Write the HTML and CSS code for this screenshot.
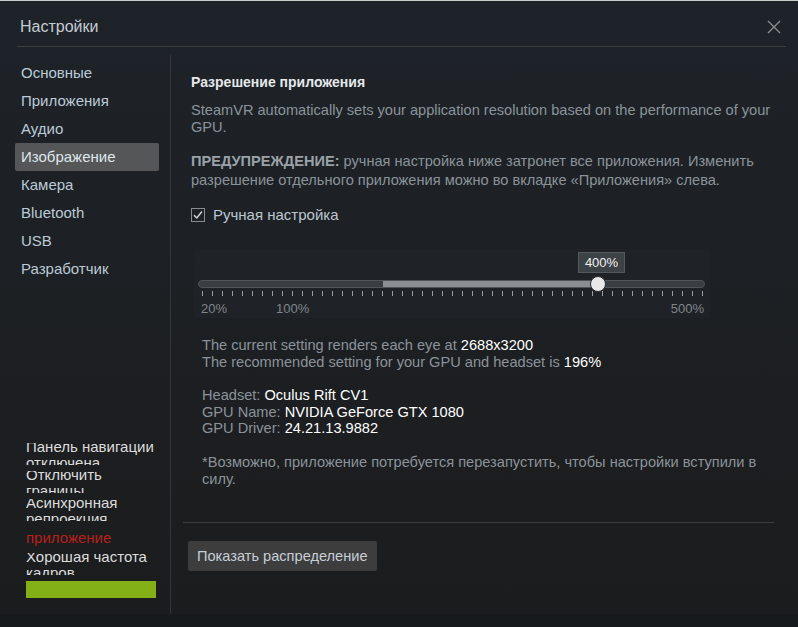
FILE: index.html
```html
<!DOCTYPE html>
<html>
<head>
<meta charset="UTF-8">
<title>Настройки</title>
<link rel="stylesheet" href="styles.css">
</head>
<body>
<div class="window">
	<div class="header">
		<span class="title">Настройки</span>
		<svg class="close" width="14" height="14" viewBox="0 0 14 14">
			<path d="M1 1 L13 13 M13 1 L1 13" stroke="#8a8d90" stroke-width="1.4" fill="none"/>
		</svg>
	</div>

	<div class="body">
		<!-- левое меню -->
		<div class="sidebar">
			<ul class="nav">
				<li>Основные</li>
				<li>Приложения</li>
				<li>Аудио</li>
				<li class="active">Изображение</li>
				<li>Камера</li>
				<li>Bluetooth</li>
				<li>USB</li>
				<li>Разработчик</li>
			</ul>
			<div class="status">
				<div class="status_item"><span>Панель навигации отключена</span></div>
				<div class="status_item"><span>Отключить границы</span></div>
				<div class="status_item"><span>Асинхронная репроекция</span></div>
				<div class="status_item red"><span>приложение</span></div>
				<div class="status_item"><span>Хорошая частота кадров</span></div>
				<div class="status_bar"></div>
			</div>
		</div>

		<!-- содержимое -->
		<div class="main">
			<div class="content">
				<h3>Разрешение приложения</h3>
				<p class="desc">SteamVR automatically sets your application resolution based on the performance of your GPU.</p>
				<p class="desc warn"><b>ПРЕДУПРЕЖДЕНИЕ:</b> ручная настройка ниже затронет все приложения. Изменить разрешение отдельного приложения можно во вкладке «Приложения» слева.</p>

				<label class="check">
					<svg width="14" height="14" viewBox="0 0 14 14">
						<rect x="0.5" y="0.5" width="13" height="13" fill="none" stroke="#8a8d90"/>
						<path d="M3 7.2 L5.8 10 L11 3.5" stroke="#d0d4d8" stroke-width="1.5" fill="none"/>
					</svg>
					Ручная настройка
				</label>

				<div class="slider">
					<div class="tip_row"><span class="tip">400%</span></div>
					<div class="track">
						<div class="fill"></div>
						<div class="thumb"></div>
					</div>
					<div class="ticks" id="ticks"></div>
					<div class="labels">
						<span>20%</span>
						<span class="l100">100%</span>
						<span class="l500">500%</span>
					</div>
				</div>

				<div class="info">
					<p>The current setting renders each eye at <em>2688x3200</em><br>
					The recommended setting for your GPU and headset is <em>196%</em></p>
					<p>Headset: <em>Oculus Rift CV1</em><br>
					GPU Name: <em>NVIDIA GeForce GTX 1080</em><br>
					GPU Driver: <em>24.21.13.9882</em></p>
					<p>*Возможно, приложение потребуется перезапустить, чтобы настройки вступили в силу.</p>
				</div>
			</div>
			<div class="footer">
				<button class="btn">Показать распределение</button>
			</div>
		</div>
	</div>
</div>
<div class="taskbar"></div>

<script>
	var ticks = document.getElementById("ticks");
	for(var i = 0; i < 51; i++) {
		ticks.appendChild(document.createElement("i"));
	}
</script>
</body>
</html>
```

FILE: styles.css
```css
body{
	margin:0;
	background-color:#171a1d;
	font-family:"Liberation Sans", Arial, sans-serif;
}
.window{
	height:613px;
	border-top:1px solid #c9cbcd;
	background:linear-gradient(#1e2329, #1b1c1d);
	display:flex; flex-direction:column;
}
.header{
	height:38px; padding-top:7px; margin:0 12px 0 17px;
	border-bottom:1px solid #3b3d3f;
	display:flex; align-items:center; justify-content:space-between;
}
.title{
	padding-left:3px; font-size:16px; color:#c5ccd3;
}
.close{ margin-right:5px; }
.body{
	flex:1; display:flex;
}

/* sidebar */
.sidebar{
	width:170px; margin-top:8px;
	border-right:1px solid #33373b;
	display:flex; flex-direction:column; justify-content:space-between;
}
.nav{
	list-style:none; margin:0; padding:4px 0 0 0;
}
.nav li{
	height:28px; line-height:28px;
	margin:0 11px 0 15px; padding-left:6px;
	font-size:15px; color:#bccad6;
	border-radius:2px;
}
.nav li.active{
	background-color:#555657; color:#dfe6ec;
}
.status{
	padding:0 0 16px 26px;
	display:flex; flex-direction:column; gap:6px;
}
.status_item{
	width:130px; height:22px; overflow:hidden;
	font-size:15px; line-height:16px; color:#dcdcdc;
}
.status_item span{ display:block; margin-top:-4px; }
.status_item.red{ height:20px; color:#b8201c; }
.status_item.red span{ margin-top:3px; }
.status_bar{
	width:130px; height:17px;
	background-color:#84b017;
}

/* main */
.main{
	flex:1; padding:0 24px 0 12px;
	display:flex; flex-direction:column;
}
.content{
	padding:26px 0 0 8px;
	border-bottom:1px solid #3b3d3f;
	height:449px;
}
h3{
	margin:0; font-size:14px; line-height:18px; color:#e6e8ea;
}
.desc{
	margin:11px 0 0 0; font-size:14.6px; line-height:17px; color:#8b939a;
}
.desc.warn{ margin-top:16px; line-height:19px; }
.desc b{ color:#9aa1a7; }
.check{
	display:flex; align-items:center; gap:8px;
	margin-top:16px; font-size:15px; color:#bcc7d0;
}

.slider{
	width:516px; height:69px; margin:26px 0 0 3px;
	background-color:#1f2327;
}
.tip_row{
	height:31px; position:relative;
}
.tip{
	position:absolute; left:384px; top:3px;
	width:45px; height:19px; line-height:19px;
	background-color:#3d4246; border:1px solid #54595e;
	text-align:center; font-size:13px; color:#f0f0f0;
}
.track{
	position:relative; margin-left:4px;
	width:505px; height:6px;
	background-color:#3a3e42;
	border:1px solid #50555a; border-radius:4px;
}
.fill{
	position:absolute; left:184px; top:0;
	width:215px; height:6px; background-color:#8a8e92;
}
.thumb{
	position:absolute; left:391px; top:-5px;
	width:14px; height:14px; border-radius:50%;
	background-color:#e8e8e8; border:1px solid #2a2d30;
}
.ticks{
	display:flex; justify-content:space-between;
	width:501px; margin:3px 0 0 8px; height:5px;
}
.ticks i{
	width:1px; height:5px; background-color:#9a9ea2;
}
.labels{
	display:flex; margin:6px 0 0 7px; width:503px;
	font-size:13px; line-height:14px; color:#7f858a;
}
.l100{ margin-left:49px; }
.l500{ margin-left:auto; }

.info{
	margin:19px 0 0 11px; font-size:14.6px; line-height:16.6px; color:#8b939a;
}
.info p{ margin:0 0 17px 0; }
.info em{ font-style:normal; color:#ffffff; }

.footer{
	padding:18px 0 0 5px;
}
.btn{
	height:30px; padding:0 9px;
	background-color:#3d3d3e; border:none; border-radius:2px;
	font-family:"Liberation Sans", Arial, sans-serif;
	font-size:14.6px; color:#c6ced6;
}
.taskbar{
	height:13px; border-bottom:1px solid #1e4d6e;
}
```
